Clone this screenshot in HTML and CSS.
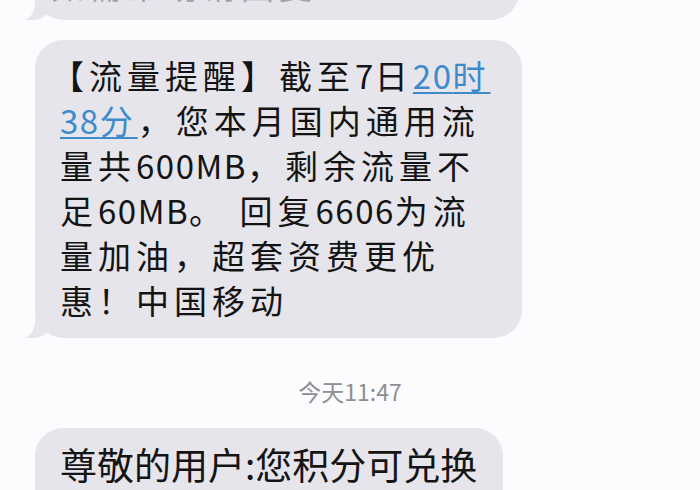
FILE: index.html
```html
<!DOCTYPE html>
<html lang="zh-CN">
<head>
    <meta charset="UTF-8">
    <meta name="viewport" content="width=device-width, initial-scale=1.0">
    <title>短信</title>
    <link rel="stylesheet" href="styles.css">
</head>
<body>

<div class="thread">
    <div class="bubble bubble-prev">
        <p class="msg">如需帮助请回复</p>
    </div>

    <div class="bubble bubble-main">
        <p class="msg">【流量提醒】截至<span class="num">7</span>日<a class="link"><span class="num">20</span>时<br><span class="num">38</span>分</a>，您本月国内通用流<br>量共<span class="num">600MB</span>，剩余流量不<br>足<span class="num">60MB</span>。 回复<span class="num">6606</span>为流<br>量加油，超套资费更优<br>惠！中国移动</p>
    </div>

    <div class="time">今天11:47</div>

    <div class="bubble bubble-next">
        <p class="msg msg-tall">尊敬的用户:您积分可兑换</p>
    </div>
</div>

</body>
</html>
```

FILE: styles.css
```css
html, body {
    margin: 0;
    height: 100%;
    overflow: hidden;
}
body {
    background: #fcfbfd;
    font-family: "Noto Sans CJK SC", "Noto Sans", sans-serif;
    color: #141414;
}
.thread {
    display: flex;
    flex-direction: column;
    align-items: flex-start;
    padding-left: 35px;
}
.bubble {
    position: relative;
    box-sizing: border-box;
    background: #e6e5eb;
    border-radius: 28px;
    padding: 13px 25px 15px;
}
/* tail at the bottom left, like iOS */
.bubble::before {
    content: "";
    position: absolute;
    left: -10px;
    bottom: 0;
    width: 26px;
    height: 22px;
    background: #e6e5eb;
    border-bottom-right-radius: 18px 16px;
}
.bubble::after {
    content: "";
    position: absolute;
    left: -26px;
    bottom: 0;
    width: 26px;
    height: 24px;
    background: #fcfbfd;
    border-bottom-right-radius: 12px 18px;
}
.bubble-prev {
    width: 484px;
    margin-top: -50px;
    padding-bottom: 12px;
}
.bubble-prev .msg {
    color: #a4a4a8;
}
.bubble-main {
    width: 487px;
    margin-top: 20px;
}
.bubble-next {
    width: 468px;
    margin-top: 22px;
    padding-bottom: 40px;
}
.msg {
    margin: 0;
    font-size: 33px;
    line-height: 45px;
    letter-spacing: 5px;
    white-space: nowrap;
    text-indent: -9px;
}
.num {
    letter-spacing: 1.5px;
}
.msg-tall {
    font-size: 37px;
    line-height: 46px;
    letter-spacing: 0;
    text-indent: 0;
}
.link {
    color: #3d8bcb;
    text-decoration: underline;
    text-decoration-thickness: 2px;
    text-underline-offset: 3px;
}
.time {
    align-self: stretch;
    margin: 38px 35px 0 0;
    text-align: center;
    font-size: 23px;
    line-height: 30px;
    color: #8e8e93;
}
```
